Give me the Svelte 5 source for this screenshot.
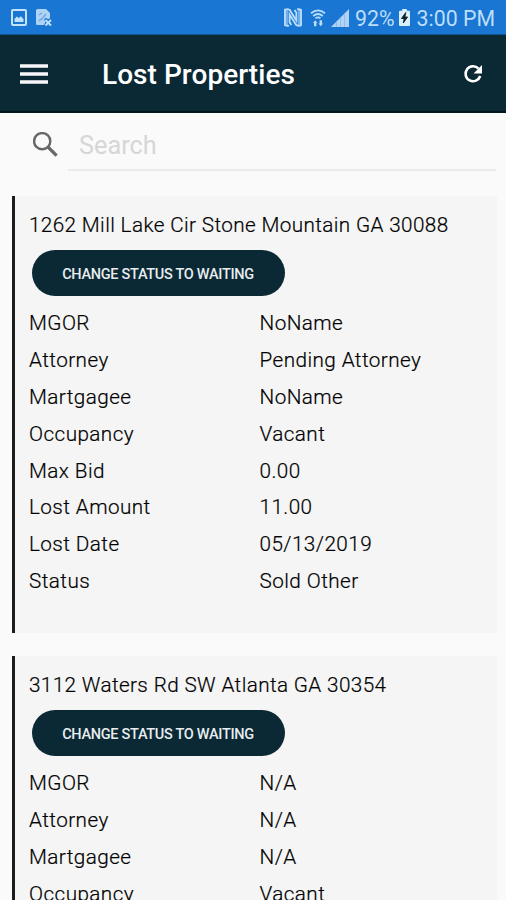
<script>
  const properties = [
    {
      address: '1262 Mill Lake Cir Stone Mountain GA 30088',
      details: [
        ['MGOR', 'NoName'],
        ['Attorney', 'Pending Attorney'],
        ['Martgagee', 'NoName'],
        ['Occupancy', 'Vacant'],
        ['Max Bid', '0.00'],
        ['Lost Amount', '11.00'],
        ['Lost Date', '05/13/2019'],
        ['Status', 'Sold Other']
      ]
    },
    {
      address: '3112 Waters Rd SW Atlanta GA 30354',
      details: [
        ['MGOR', 'N/A'],
        ['Attorney', 'N/A'],
        ['Martgagee', 'N/A'],
        ['Occupancy', 'Vacant']
      ]
    }
  ];
</script>

<div class="screen">
  <div class="status-bar">
    <svg class="image-icon" width="16" height="17" viewBox="0 0 16 17">
      <rect x="1" y="1" width="14" height="15" rx="1" fill="none" stroke="#c3e2fb" stroke-width="2" />
      <path d="M3.5 13V10l2.3-2.5 2 1.6 2-1.8 2.7 2.7v3z" fill="#c3e2fb" />
    </svg>
    <svg class="file-icon" width="17" height="18" viewBox="0 0 17 18">
      <path d="M1.5 0H10l4 4v5.2l-2 1-2-1.5-2 2 1.6 2L8 16H1.5Q0 16 0 14.5v-13Q0 0 1.5 0z" fill="#afd2f5" />
      <path d="M3 6l3-2M5 11l5-6M3 12l2-2" stroke="#6fa8e2" stroke-width="1.5" />
      <path d="M9.5 11l5.5 5.5M15 11l-5.5 5.5" stroke="#c3e2fb" stroke-width="1.8" />
    </svg>
    <div class="indicators">
      <svg class="nfc" width="18" height="19" viewBox="0 0 18 19">
        <path d="M5 17.6Q3 18.2 1 17.2V1.6Q3.5.8 5.6 1.8L12.4 12.5V4.6L10.5 2" fill="none" stroke="#b8dcfb" stroke-width="1.9" />
        <path d="M13 1.4Q15 .8 17 1.8V17.4Q14.5 18.2 12.4 17.2L5.6 6.5V14.4L7.5 17" fill="none" stroke="#b8dcfb" stroke-width="1.9" />
        <path d="M2 2.2h2V17H2zM14 2h2v15h-2z" fill="#b8dcfb" opacity=".55" />
      </svg>
      <svg class="wifi" width="16" height="18" viewBox="0 0 16 18">
        <path d="M1 4.2Q8-1.5 15 4.2M3.2 7Q8 3 12.8 7M5.5 9.3Q8 7.4 10.5 9.3" fill="none" stroke="#b8dcfb" stroke-width="1.8" />
        <path d="M3 14L5.2 11.2 7.4 14H6.4v3.2H4V14zM8.6 14.4h1v-3.2H12v3.2h1l-2.2 2.8z" fill="#b8dcfb" />
      </svg>
      <svg class="signal" width="18" height="18" viewBox="0 0 18 18">
        <path d="M0 18L18 0v18z" fill="#b0d3f5" />
        <path d="M5.5 12v6M9.5 8v10M13.5 4v14" stroke="#82b8eb" stroke-width=".8" />
      </svg>
      <span class="percent">92%</span>
      <svg class="battery" width="11" height="17" viewBox="0 0 11 17">
        <path d="M3.2 0h4.6v1.8H10q1 0 1 1V16q0 1-1 1H1q-1 0-1-1V2.8q0-1 1-1h2.2z" fill="#d9effd" />
        <path d="M6.8 3.5L2.5 9.5h2.7L4.3 14l4.2-6H5.8z" fill="#111b22" stroke="#111b22" stroke-width=".9" />
      </svg>
      <span class="time">3:00 PM</span>
    </div>
  </div>

  <header>
    <svg class="menu" width="28" height="20" viewBox="0 0 28 20">
      <path d="M0 2h28M0 10h28M0 18h28" stroke="#f7f7fa" stroke-width="3.6" />
    </svg>
    <h1>Lost Properties</h1>
    <svg class="refresh" width="20" height="20" viewBox="0 0 20 20">
      <path d="M15.5 4.6A7.5 7.5 0 1 0 17.2 12" fill="none" stroke="#fff" stroke-width="2.6" />
      <path d="M19 1v8.4h-8.4z" fill="#fff" />
    </svg>
  </header>

  <div class="search">
    <svg width="25" height="25" viewBox="0 0 25 25">
      <circle cx="9.2" cy="9.2" r="8.1" fill="none" stroke="#686868" stroke-width="2.4" />
      <path d="M15 15L23.6 23.6" stroke="#686868" stroke-width="3.2" />
    </svg>
    <div class="field"><span>Search</span></div>
  </div>

  <main>
    {#each properties as property}
      <article>
        <h2>{property.address}</h2>
        <button>CHANGE STATUS TO WAITING</button>
        <dl>
          {#each property.details as [label, value]}
            <div class="row"><dt>{label}</dt><dd>{value}</dd></div>
          {/each}
        </dl>
      </article>
    {/each}
  </main>
</div>

<style>
  :global(body) { margin: 0; background: #fafafa; }
  .screen {
    width: 506px;
    height: 900px;
    overflow: hidden;
    display: flex;
    flex-direction: column;
    background: #fafafa;
    font-family: Roboto, sans-serif;
    color: #000;
  }
  .status-bar {
    flex: none;
    box-sizing: border-box;
    height: 35px;
    padding: 1px 11px 0 11px;
    display: flex;
    align-items: center;
    background: #1976d2;
    border-bottom: 1px solid #14578f;
    color: #bcdefb;
  }
  .file-icon { margin-left: 9px; }
  .indicators {
    margin-left: auto;
    display: flex;
    align-items: center;
    font-size: 21.3px;
    white-space: nowrap;
  }
  .indicators span { padding-top: 2px; }
  .wifi { margin-left: 8px; }
  .signal { margin-left: 5px; }
  .percent { margin-left: 6px; }
  .battery { margin-left: 4px; }
  .time { margin-left: 7px; }
  header {
    flex: none;
    box-sizing: border-box;
    height: 78px;
    padding: 0 23px 0 20px;
    display: flex;
    align-items: center;
    background: #0a2935;
    border-bottom: 2px solid #03151d;
  }
  .menu, .refresh { margin-top: 1px; }
  h1 {
    margin: 4px 0 0 54px;
    font-size: 28px;
    font-weight: 500;
    line-height: 32px;
    letter-spacing: 0.05px;
    white-space: nowrap;
    color: #fff;
  }
  .refresh { margin-left: auto; }
  .search {
    flex: none;
    height: 83px;
    padding: 0 10px 0 32.5px;
    display: flex;
    align-items: flex-start;
  }
  .search svg { margin-top: 19px; }
  .field {
    box-sizing: border-box;
    flex: 1;
    height: 58px;
    margin-left: 10.5px;
    padding: 18px 0 0 11px;
    border-bottom: 2px solid #ebebeb;
    font-size: 25.3px;
    line-height: 30px;
    color: #d6d6d6;
  }
  main { display: flex; flex-direction: column; gap: 23px; }
  article {
    flex: none;
    box-sizing: border-box;
    width: 485px;
    height: 437px;
    margin-left: 12px;
    padding: 15px 0 0 14px;
    border-left: 3px solid #1c1c1c;
    background: #f5f5f5;
  }
  h2 {
    margin: 0;
    font-size: 20.7px;
    font-weight: 300;
    line-height: 29px;
    letter-spacing: 0.38px;
    -webkit-text-stroke: 0.2px #000;
    white-space: nowrap;
  }
  button {
    display: block;
    width: 253px;
    height: 46px;
    margin: 10px 0 0 2.5px;
    padding: 2px 0 0;
    border: 0;
    border-radius: 23px;
    background: #0a2935;
    color: #e8edef;
    font: 500 14.5px Roboto, sans-serif;
    letter-spacing: -0.3px;
    white-space: nowrap;
  }
  dl { margin: 9px 0 0; }
  .row {
    display: flex;
    height: 36.9px;
    line-height: 37px;
    font-size: 20.7px;
    letter-spacing: 0.43px;
    font-weight: 300;
    -webkit-text-stroke: 0.2px #000;
  }
  dt { width: 230.5px; }
  dd { margin: 0; }
</style>
